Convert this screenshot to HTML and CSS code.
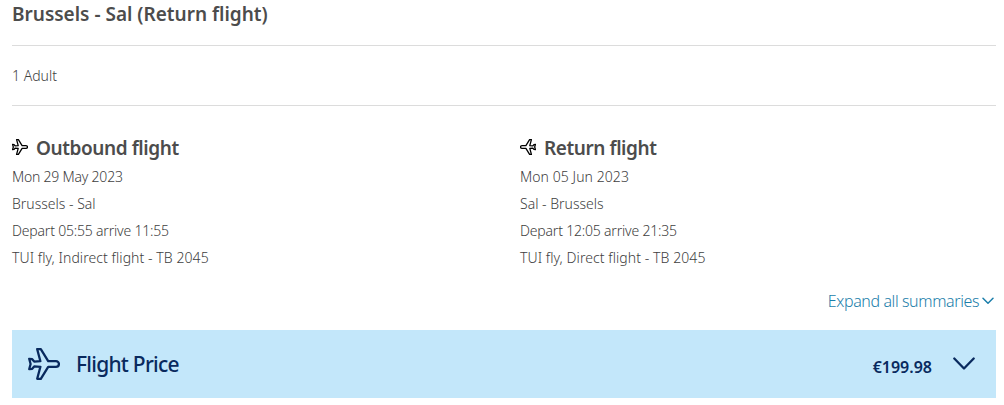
FILE: index.html
```html
<!DOCTYPE html>
<html lang="en">
<head>
    <meta charset="UTF-8">
    <meta name="viewport" content="width=device-width, initial-scale=1.0">
    <title>Flight summary</title>
    <link rel="stylesheet" href="styles.css">
</head>
<body>
    <svg class="symbols">
        <symbol id="plane" viewBox="0 0 32 32">
            <path d="M1.2 10.8L4.2 11.2L6.2 13.6L12.4 13.2L9.2 1.2H12.8L20.2 13.1H28A2.9 2.9 0 0 1 28 18.9H20.2L12.8 30.8H9.2L12.4 18.8L6.2 18.4L4.2 20.8L1.2 21.2L2.6 16Z"/>
        </symbol>
    </svg>

    <main class="summary">
        <h1 class="route-title">Brussels - Sal (Return flight)</h1>
        <p class="passengers">1 Adult</p>

        <div class="flights">
            <section class="flight outbound">
                <h2><svg class="plane-icon"><use href="#plane"/></svg><span>Outbound flight</span></h2>
                <p class="date">Mon 29 May 2023</p>
                <p class="places">Brussels - Sal</p>
                <p class="times">Depart 05:55 arrive 11:55</p>
                <p class="carrier">TUI fly, Indirect flight - TB 2045</p>
            </section>
            <section class="flight return">
                <h2><svg class="plane-icon"><use href="#plane"/></svg><span>Return flight</span></h2>
                <p class="date">Mon 05 Jun 2023</p>
                <p class="places">Sal - Brussels</p>
                <p class="times">Depart 12:05 arrive 21:35</p>
                <p class="carrier">TUI fly, Direct flight - TB 2045</p>
            </section>
        </div>

        <a class="expand-all">
            <span>Expand all summaries</span>
            <svg class="chevron-small" viewBox="0 0 12 8"><path d="M1 1.2L6 6.2L11 1.2"/></svg>
        </a>

        <div class="price-bar">
            <svg class="plane-large"><use href="#plane"/></svg>
            <h3>Flight Price</h3>
            <span class="price">€199.98</span>
            <svg class="chevron" viewBox="0 0 22 14"><path d="M1.3 1.5L11 11.5L20.7 1.5"/></svg>
        </div>
    </main>
</body>
</html>
```

FILE: styles.css
```css
* {
    margin: 0;
    padding: 0;
    box-sizing: border-box;
}

body {
    background-color: #fff;
    color: #4c4c4c;
    font-family: "Noto Sans", "Open Sans", sans-serif;
    font-size: 14px;
    overflow: hidden;
}

svg {
    fill: none;
    stroke-linecap: round;
    stroke-linejoin: round;
    flex: none;
}

.symbols {
    display: none;
}

.summary {
    padding: 0 8px 0 12px;
}

.route-title {
    height: 46px;
    font-size: 19px;
    font-weight: 600;
    line-height: 28px;
    border-bottom: 1px solid #dcdcdc;
}

.passengers {
    height: 60px;
    line-height: 59px;
    font-weight: 300;
    color: #404040;
    border-bottom: 1px solid #dcdcdc;
}

/* Outbound and return columns */
.flights {
    display: flex;
    padding-top: 27px;
}

.flight {
    width: 508px;
    flex: none;
}

.return {
    width: 476px;
}

.flight h2 {
    display: flex;
    align-items: center;
    gap: 8px;
    height: 30px;
    font-size: 19px;
    font-weight: 600;
    letter-spacing: -0.42px;
}

.flight p {
    font-weight: 300;
    line-height: 27px;
    color: #404040;
}

.flight .times {
    letter-spacing: -0.19px;
}

.flight .carrier {
    letter-spacing: 0.07px;
}

.outbound .date {
    letter-spacing: -0.22px;
}

.return .date {
    letter-spacing: 0.07px;
}

.plane-icon {
    width: 16px;
    height: 16px;
    margin-bottom: 2px;
    stroke: #000;
    stroke-width: 2.6;
}

.return .plane-icon {
    transform: scaleX(-1);
}

.expand-all {
    display: flex;
    justify-content: flex-end;
    align-items: center;
    gap: 3px;
    height: 59px;
    padding-right: 2px;
    color: #1b7eaa;
    font-size: 16px;
    font-weight: 300;
    letter-spacing: -0.4px;
}

.chevron-small {
    width: 12px;
    height: 8px;
    stroke: #1b7eaa;
    stroke-width: 1.5;
}

/* Price bar */
.price-bar {
    display: flex;
    align-items: center;
    height: 68px;
    padding: 0 21px 0 16px;
    background-color: #c3e7fa;
    color: #092a5e;
}

.plane-large {
    width: 32px;
    height: 32px;
    margin-right: 16px;
    stroke: #092a5e;
    stroke-width: 2.3;
}

.price-bar h3 {
    font-size: 21px;
    font-weight: 500;
    letter-spacing: -0.75px;
}

.price {
    margin-left: auto;
    margin-right: 21px;
    padding-top: 6px;
    font-size: 16px;
    font-weight: 600;
}

.chevron {
    width: 22px;
    height: 14px;
    stroke: #092a5e;
    stroke-width: 2.3;
}
```
